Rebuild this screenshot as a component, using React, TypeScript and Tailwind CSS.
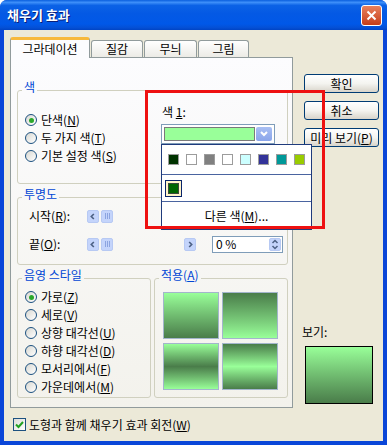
import React from "react";

function K({ children }: { children: React.ReactNode }) {
  return <span className="underline underline-offset-[1px]">{children}</span>;
}

function Radio({ checked, children }: { checked?: boolean; children: React.ReactNode }) {
  return (
    <div className="h-[18px] flex items-center gap-[4px]">
      <span className="w-[12px] h-[12px] rounded-full border border-[#1c5180] bg-linear-to-br from-[#d8d8d2] to-white flex items-center justify-center">
        {checked && <span className="w-[5px] h-[5px] rounded-full bg-[#2ba82b]" />}
      </span>
      <span>{children}</span>
    </div>
  );
}

function Chevron({ dir }: { dir: "left" | "right" }) {
  return (
    <svg width="12" height="13" viewBox="0 0 12 13">
      <path
        d={dir === "left" ? "M7 3.5 L4 6.5 L7 9.5" : "M5 3.5 L8 6.5 L5 9.5"}
        fill="none"
        stroke="#4d6185"
        strokeWidth="2"
      />
    </svg>
  );
}

function ScrollBtn({ dir }: { dir: "left" | "right" }) {
  return (
    <span className="w-[12px] h-[13px] rounded-[2px] border border-[#b7c9f3] bg-[#c4d4fb] flex items-center justify-center">
      <Chevron dir={dir} />
    </span>
  );
}

function Track() {
  return (
    <div className="w-[109px] h-[13px] flex items-center">
      <ScrollBtn dir="left" />
      <span className="ml-[2px] w-[12px] h-[13px] rounded-[2px] border border-[#b7c9f3] bg-[#c4d4fb] flex items-center justify-center gap-[1px]">
        <span className="w-px h-[6px] bg-[#8ca4e0]" />
        <span className="w-px h-[6px] bg-[#8ca4e0]" />
        <span className="w-px h-[6px] bg-[#8ca4e0]" />
      </span>
      <span className="flex-1" />
      <ScrollBtn dir="right" />
    </div>
  );
}

function SpinBox({ value }: { value: string }) {
  return (
    <div className="ml-[16px] w-[71px] h-[17px] border border-[#7f9db9] bg-white flex items-center pl-[3px] pr-[1px]">
      <span className="flex-1">{value}</span>
      <span className="w-[12px] h-[13px] rounded-[2px] bg-[#c4d4fb] border border-[#b7c9f3] flex items-center justify-center">
        <svg width="10" height="11" viewBox="0 0 10 11">
          <path d="M2.5 4 L5 1.5 L7.5 4 M2.5 7 L5 9.5 L7.5 7" fill="none" stroke="#4d6185" strokeWidth="1.5" />
        </svg>
      </span>
    </div>
  );
}

function XpButton({ children }: { children: React.ReactNode }) {
  return (
    <div className="h-[19px] rounded-[3px] border border-[#003c74] bg-linear-to-b from-white via-[#f4f4f0] to-[#d8d4ca] flex items-center justify-center">
      {children}
    </div>
  );
}

const legend = "ml-[4px] px-[2px] pb-[6px] leading-[14px] text-[#0046d5]";
const group = "border border-[#d0d0bf] rounded-[3px]";

const swatches = ["#003300", "#ffffff", "#808080", "#ffffff", "#ccffff", "#333399", "#009999", "#99cc00"];

export default function App() {
  return (
    <div className="relative w-[387px] h-[445px] flex flex-col rounded-t-[7px] bg-[#0a46d8] text-[12px] leading-[14px] text-black font-['Noto_Sans_CJK_KR','Noto_Sans',sans-serif]">
      {/* title bar */}
      <div className="h-[30px] shrink-0 flex items-center pl-[7px] pr-[5px] rounded-t-[7px] bg-[linear-gradient(to_bottom,#0a5fde_0%,#3d8ff9_8%,#0b62e6_18%,#0459e4_45%,#0058e8_80%,#0450d6_92%,#0044c4_100%)]">
        <span className="flex-1 text-[13px] font-bold text-white [text-shadow:1px_1px_#0a1e78]">채우기 효과</span>
        <span className="w-[21px] h-[21px] rounded-[3px] border border-white bg-linear-to-b from-[#e8805c] to-[#c63c16] flex items-center justify-center">
          <svg width="11" height="11" viewBox="0 0 11 11">
            <path d="M1.5 1.5 L9.5 9.5 M9.5 1.5 L1.5 9.5" stroke="white" strokeWidth="2" />
          </svg>
        </span>
      </div>

      {/* body */}
      <div className="flex-1 mx-[4px] mb-[4px] bg-[#ece9d8] flex flex-col pl-[6px] pr-[4px] pt-[7px]">
        <div className="flex">
          {/* left: tabs + panel */}
          <div className="w-[283px] flex flex-col">
            <div className="h-[20px] flex items-end gap-[1px]">
              <div className="relative z-10 -mb-px w-[80px] h-[21px] rounded-t-[3px] border-x border-[#919b9c] border-t-[3px] border-t-[#f7b93c] bg-[#fcfcfe] flex items-center justify-center pb-[1px]">
                그라데이션
              </div>
              {["질감", "무늬", "그림"].map((t, i) => (
                <div
                  key={t}
                  className={`h-[17px] rounded-t-[3px] border border-b-0 border-[#919b9c] bg-linear-to-b from-white to-[#ecebe6] flex items-center justify-center ${
                    i === 0 ? "w-[52px]" : i === 1 ? "w-[53px]" : "w-[51px]"
                  }`}
                >
                  {t}
                </div>
              ))}
            </div>

            <div className="h-[351px] border border-[#919b9c] bg-linear-to-b from-[#fcfcfe] to-[#f3f2ec] pt-[22px] pl-[6px] pr-[4px] flex flex-col">
              {/* 색 */}
              <fieldset className={group}>
                <legend className={legend}>색</legend>
                <div className="flex pl-[7px] pt-[11px] pb-[18px]">
                  <div className="w-[136px] flex flex-col">
                    <Radio checked>
                      단색(<K>N</K>)
                    </Radio>
                    <Radio>
                      두 가지 색(<K>T</K>)
                    </Radio>
                    <Radio>
                      기본 설정 색(<K>S</K>)
                    </Radio>
                  </div>
                  <div className="-mt-[6px] flex flex-col">
                    <span className="pl-[1px]">
                      색 <K>1</K>:
                    </span>
                    <div className="relative mt-[5px] w-[114px] h-[20px] border border-[#7f9db9] bg-white flex p-[2px] gap-[1px]">
                      <span className="flex-1 border border-[#7a7a7a] bg-[#99ff99]" />
                      <span className="w-[16px] rounded-[2px] bg-linear-to-b from-[#a9bff3] to-[#8aa5ea] flex items-center justify-center">
                        <svg width="10" height="8" viewBox="0 0 10 8">
                          <path d="M2 2 L5 5 L8 2" fill="none" stroke="#ffffff" strokeWidth="2" />
                        </svg>
                      </span>

                      {/* opened colour list */}
                      <div className="absolute z-30 left-[-1px] top-[19px] w-[151px] h-[86px] border border-[#1f3b7c] bg-white flex flex-col">
                        <div className="h-[29px] flex items-center gap-[7px] pl-[6px]">
                          {swatches.map((c, i) => (
                            <span
                              key={i}
                              className="w-[11px] h-[11px] border border-[#9c9c9c]"
                              style={{ backgroundColor: c }}
                            />
                          ))}
                        </div>
                        <div className="h-px bg-[#4a64a0]" />
                        <div className="h-[26px] flex items-center pl-[3px]">
                          <span className="w-[17px] h-[17px] border border-[#0a246a] bg-[#fff3c8] flex items-center justify-center">
                            <span className="w-[11px] h-[11px] border border-[#3a4a3a] bg-[#006600]" />
                          </span>
                        </div>
                        <div className="h-px bg-[#4a64a0]" />
                        <div className="flex-1 flex items-center justify-center">
                          다른 색(<K>M</K>)...
                        </div>
                      </div>
                    </div>
                  </div>
                </div>
              </fieldset>

              {/* 투명도 */}
              <fieldset className={`${group} mt-[3px]`}>
                <legend className={legend}>투명도</legend>
                <div className="flex flex-col gap-[10px] pl-[11px] pb-[11px]">
                  <div className="h-[18px] flex items-center">
                    <span className="w-[58px]">
                      시작(<K>R</K>):
                    </span>
                    <Track />
                    <SpinBox value="0 %" />
                  </div>
                  <div className="h-[18px] flex items-center">
                    <span className="w-[58px]">
                      끝(<K>O</K>):
                    </span>
                    <Track />
                    <SpinBox value="0 %" />
                  </div>
                </div>
              </fieldset>

              {/* 음영 스타일 + 적용 */}
              <div className="mt-[3px] flex gap-[3px]">
                <fieldset className={`${group} w-[134px]`}>
                  <legend className={legend}>음영 스타일</legend>
                  <div className="flex flex-col pl-[7px] pb-[1px]">
                    <Radio checked>
                      가로(<K>Z</K>)
                    </Radio>
                    <Radio>
                      세로(<K>V</K>)
                    </Radio>
                    <Radio>
                      상향 대각선(<K>U</K>)
                    </Radio>
                    <Radio>
                      하향 대각선(<K>D</K>)
                    </Radio>
                    <Radio>
                      모서리에서(<K>F</K>)
                    </Radio>
                    <Radio>
                      가운데에서(<K>M</K>)
                    </Radio>
                  </div>
                </fieldset>
                <fieldset className={`${group} w-[134px]`}>
                  <legend className={legend}>
                    적용(<K>A</K>)
                  </legend>
                  <div className="grid grid-cols-[56px_56px] gap-[3px] gap-y-[4px] pl-[8px] pt-[4px]">
                    <span className="h-[47px] border border-[#a3b5cc] bg-linear-to-b from-[#99ff99] to-[#4a7d4a]" />
                    <span className="h-[47px] border border-[#a3b5cc] bg-linear-to-b from-[#4a7d4a] to-[#99ff99]" />
                    <span className="h-[47px] border border-[#a3b5cc] bg-linear-to-b from-[#99ff99] via-[#4a7d4a] to-[#99ff99]" />
                    <span className="h-[47px] border border-[#a3b5cc] bg-linear-to-b from-[#4a7d4a] via-[#99ff99] to-[#4a7d4a]" />
                  </div>
                </fieldset>
              </div>
            </div>
          </div>

          {/* right: buttons + preview */}
          <div className="ml-[11px] w-[75px] flex flex-col gap-[8px] pt-[37px] pb-[4px]">
            <XpButton>확인</XpButton>
            <XpButton>취소</XpButton>
            <XpButton>
              미리 보기(<K>P</K>)
            </XpButton>
            <div className="flex-1" />
            <span className="-ml-[2px] -mb-[1px]">보기:</span>
            <div className="ml-[1px] w-[68px] h-[58px] border border-black bg-linear-to-b from-[#99ff99] to-[#4a7d4a]" />
          </div>
        </div>

        {/* bottom checkbox */}
        <div className="flex-1 flex items-center pl-[3px] gap-[3px]">
          <span className="w-[13px] h-[13px] border border-[#1c5180] bg-linear-to-br from-[#dcdcd7] to-white flex items-center justify-center">
            <svg width="9" height="9" viewBox="0 0 9 9">
              <path d="M1 4.5 L3.5 7 L8 2" fill="none" stroke="#21a121" strokeWidth="2" />
            </svg>
          </span>
          <span>
            도형과 함께 채우기 효과 회전(<K>W</K>)
          </span>
        </div>
      </div>

      {/* red annotation frame */}
      <div className="pointer-events-none absolute z-50 left-[145px] top-[90px] w-[180px] h-[139px] border-[3px] border-[#ee1111]" />
    </div>
  );
}
